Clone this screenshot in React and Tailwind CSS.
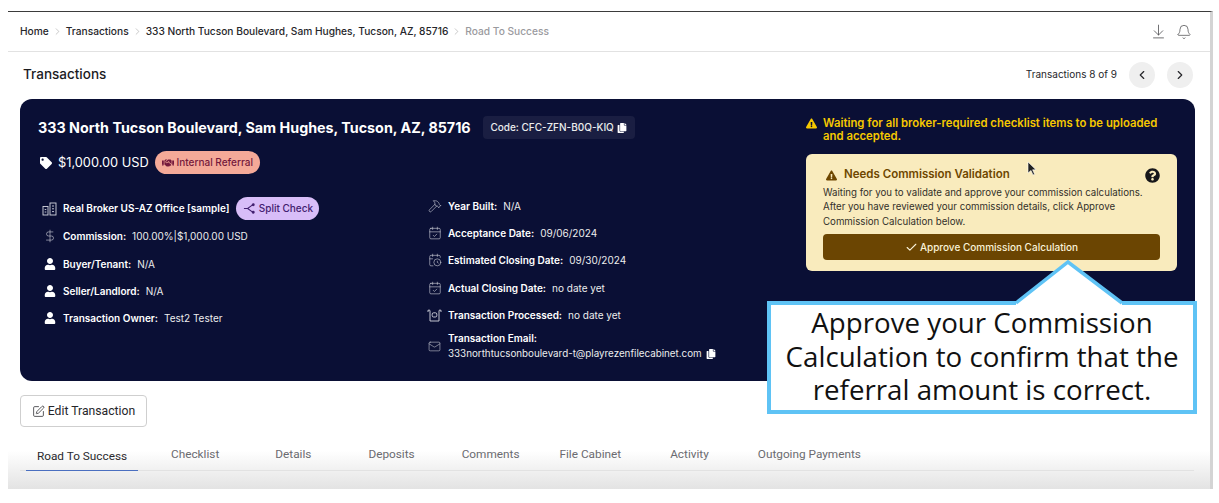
import React from 'react';
import {
  ArrowDownToLine, Bell, CalendarCheck, CalendarClock, Check, ChevronLeft, ChevronRight,
  ChevronRight as Sep, DollarSign, Hammer, Mail, SquarePen,
} from 'lucide-react';
import { FaCopy, FaExclamationTriangle, FaHandshake, FaQuestionCircle, FaTag, FaUser } from 'react-icons/fa';

const Split = () => (
  <svg width="13" height="13" viewBox="0 0 14 14" fill="none" stroke="currentColor" strokeWidth="1.2">
    <path d="M1 7h4l5-3.6M5 7l5 3.6" />
    <circle cx="11" cy="3" r="1" fill="currentColor" />
    <circle cx="11" cy="11" r="1" fill="currentColor" />
  </svg>
);

const Office = () => (
  <svg width="15" height="14" viewBox="0 0 15 14" fill="none" stroke="currentColor" strokeWidth="0.9">
    <rect x="1" y="4.5" width="5" height="8.5" />
    <rect x="8" y="1" width="6" height="12" />
    <path d="M2.7 7.5h1.6M2.7 10h1.6M10 4h2M10 6.8h2M10 9.6h2" />
  </svg>
);

const Processed = () => (
  <svg width="15" height="13" viewBox="0 0 15 13" fill="none" stroke="currentColor" strokeWidth="0.9">
    <path d="M1 3V1.2h2M12 1.2h2V3" />
    <path d="M3 1.5v10.5h9V1.5" />
    <rect x="5.2" y="3.8" width="4.6" height="4.2" rx="1.4" />
  </svg>
);

const Crumb = ({ children, last }) => (
  <>
    <span className={last ? 'text-[#9a9a9e]' : 'text-[#26262a]'}>{children}</span>
    {!last && <Sep size={11} strokeWidth={1} className="text-[#8a8a8a] mx-[3px]" />}
  </>
);

const InfoRow = ({ icon, label, value, className = '' }) => (
  <div className={`flex items-center h-[16px] ${className}`}>
    <span className="w-[25px] flex justify-center text-[#d6d7e0] shrink-0 -ml-[1px] mr-[1px]">{icon}</span>
    <span className="font-semibold text-white">{label}</span>
    {value && <span className="ml-[6px] text-[#eceded]">{value}</span>}
  </div>
);

const tabs = [
  { label: 'Checklist', cls: 'ml-[33px]' },
  { label: 'Details', cls: 'ml-[56px]' },
  { label: 'Deposits', cls: 'ml-[57px]' },
  { label: 'Comments', cls: 'ml-[47px]' },
  { label: 'File Cabinet', cls: 'ml-[40px]' },
  { label: 'Activity', cls: 'ml-[49px]' },
  { label: 'Outgoing Payments', cls: 'ml-[49px]' },
];

export default function App() {
  return (
    <div className="relative w-[1219px] h-[503px] bg-white overflow-hidden font-['Inter',sans-serif]">
      <div className="ml-[8px] mt-[11px] w-[1205px] h-[478px] border-t border-t-[#3b3b3b] border-r-[3px] border-r-[#d4d4d4] bg-gradient-to-b from-white from-[92%] to-[#e3e3e3] flex flex-col">
        {/* Breadcrumb bar */}
        <div className="h-[40px] shrink-0 border-b border-[#e2e2e2] pl-[12px] pr-[18px] flex items-center justify-between">
          <div className="flex items-center text-[10.2px] font-medium">
            <Crumb>Home</Crumb>
            <Crumb>Transactions</Crumb>
            <Crumb>333 North Tucson Boulevard, Sam Hughes, Tucson, AZ, 85716</Crumb>
            <Crumb last>Road To Success</Crumb>
          </div>
          <div className="flex items-center gap-[9px] text-[#48484c]">
            <ArrowDownToLine size={17} strokeWidth={1.1} />
            <Bell size={16} strokeWidth={1.1} />
          </div>
        </div>

        {/* Title row */}
        <div className="h-[47px] shrink-0 pl-[15px] pr-[17px] pb-[2px] flex items-center justify-between">
          <h1 className="text-[13.5px] font-medium text-[#1b1b1f]">Transactions</h1>
          <div className="flex items-center text-[10px] text-[#26262a]">
            <span>Transactions 8 of 9</span>
            <button className="ml-[12px] w-[26px] h-[26px] rounded-full bg-[#efefef] flex items-center justify-center">
              <ChevronLeft size={14} strokeWidth={2} />
            </button>
            <button className="ml-[12px] w-[26px] h-[26px] rounded-full bg-[#efefef] flex items-center justify-center">
              <ChevronRight size={14} strokeWidth={2} />
            </button>
          </div>
        </div>

        {/* Transaction card */}
        <div className="ml-[12px] w-[1175px] h-[282px] shrink-0 rounded-[12px] bg-[#0a0f35] pl-[18px] pr-[18px] flex justify-between">
          <div className="pt-[17px]">
            <div className="flex items-center h-[23px]">
              <h2 className="text-[14.3px] font-bold text-white">333 North Tucson Boulevard, Sam Hughes, Tucson, AZ, 85716</h2>
              <div className="ml-[12px] h-[23px] w-[152px] rounded-[4px] bg-[#1a1e42] flex items-center justify-center gap-[3px] text-[10px] font-medium text-[#eceded]">
                Code: CFC-ZFN-B0Q-KIQ <FaCopy size={10} className="text-white" />
              </div>
            </div>
            <div className="mt-[12px] flex items-center h-[23px]">
              <FaTag size={12} className="text-white ml-[2px]" />
              <span className="ml-[6px] text-[12.8px] text-white">$1,000.00 USD</span>
              <span className="ml-[6px] h-[23px] w-[105px] rounded-full bg-[#f4a998] flex items-center justify-center gap-[3px] text-[10px] font-medium text-[#74193c]">
                <FaHandshake size={12} /> Internal Referral
              </span>
            </div>

            <div className="mt-[23px] flex text-[10px]">
              <div className="w-[385px] flex flex-col">
                <div className="h-[23px] flex items-center">
                  <InfoRow icon={<Office />} label="Real Broker US-AZ Office [sample]" />
                  <span className="ml-[7px] h-[23px] w-[83px] rounded-full bg-[#d8bdf8] flex items-center justify-center gap-[3px] text-[10px] font-medium text-[#42206f]">
                    <Split /> Split Check
                  </span>
                </div>
                <InfoRow className="mt-[8px]" icon={<DollarSign size={14} strokeWidth={1} />} label="Commission:" value="100.00%|$1,000.00 USD" />
                <InfoRow className="mt-[12px]" icon={<FaUser size={12} className="text-white" />} label="Buyer/Tenant:" value="N/A" />
                <InfoRow className="mt-[11px]" icon={<FaUser size={12} className="text-white" />} label="Seller/Landlord:" value="N/A" />
                <InfoRow className="mt-[11px]" icon={<FaUser size={12} className="text-white" />} label="Transaction Owner:" value="Test2 Tester" />
              </div>
              <div className="flex flex-col pt-[1px]">
                <InfoRow icon={<Hammer size={14} strokeWidth={1} />} label="Year Built:" value="N/A" />
                <InfoRow className="mt-[11px]" icon={<CalendarCheck size={14} strokeWidth={1} />} label="Acceptance Date:" value="09/06/2024" />
                <InfoRow className="mt-[11px]" icon={<CalendarClock size={14} strokeWidth={1} />} label="Estimated Closing Date:" value="09/30/2024" />
                <InfoRow className="mt-[12px]" icon={<CalendarCheck size={14} strokeWidth={1} />} label="Actual Closing Date:" value="no date yet" />
                <InfoRow className="mt-[11px]" icon={<Processed />} label="Transaction Processed:" value="no date yet" />
                <div className="mt-[8px] flex items-center">
                  <span className="w-[25px] flex justify-center text-[#d6d7e0] shrink-0 -ml-[1px] mr-[1px]"><Mail size={13} strokeWidth={1} /></span>
                  <div className="leading-[15px]">
                    <div className="font-semibold text-white">Transaction Email:</div>
                    <div className="flex items-center gap-[4px] text-[9.8px] text-[#eceded]">
                      333northtucsonboulevard-t@playrezenfilecabinet.com <FaCopy size={10} className="text-white" />
                    </div>
                  </div>
                </div>
              </div>
            </div>
          </div>

          <div className="w-[371px] pt-[18px]">
            <div className="flex text-[#f6c800] text-[11.35px] font-semibold leading-[13px]">
              <FaExclamationTriangle size={11} className="mt-[1px] mr-[6px] shrink-0" />
              <p>Waiting for all broker-required checklist items to be uploaded<br />and accepted.</p>
            </div>
            <div className="mt-[11px] h-[117px] rounded-[6px] bg-[#f9ebbd] px-[17px] pt-[13px]">
              <div className="flex items-center justify-between h-[16px]">
                <div className="flex items-center text-[11.5px] font-semibold text-[#6e4700]">
                  <FaExclamationTriangle size={11} className="ml-[3px] mr-[7px]" />
                  Needs Commission Validation
                </div>
                <FaQuestionCircle size={15} className="text-[#17171a]" />
              </div>
              <p className="mt-[3px] text-[9.7px] leading-[14.4px] text-[#33302a]">
                Waiting for you to validate and approve your commission calculations.<br />
                After you have reviewed your commission details, click Approve<br />
                Commission Calculation below.
              </p>
              <button className="mt-[5px] w-full h-[26px] rounded-[4px] bg-[#6b4502] text-[#faf2d8] text-[10px] font-medium flex items-center justify-center gap-[2px]">
                <Check size={13} strokeWidth={2} /> Approve Commission Calculation
              </button>
            </div>
          </div>
        </div>

        {/* Edit button */}
        <button className="ml-[12px] mt-[14px] w-[127px] h-[32px] shrink-0 rounded-[4px] border border-[#cfcfcf] bg-white flex items-center justify-center gap-[3px] text-[12.2px] font-['Roboto',sans-serif] text-[#26262a]">
          <SquarePen size={13} strokeWidth={1.4} /> Edit Transaction
        </button>

        {/* Tabs */}
        <div className="ml-[12px] mt-[17px] w-[1174px] h-[27px] shrink-0 border-b border-[#e2e2e2] flex font-['Roboto',sans-serif] text-[11.8px] text-[#6b6b70] pl-[6px]">
          <div className="w-[112px] h-[27px] border-b border-[#4a6fc0] pt-[4px] text-center text-[#2a2a2e]">Road To Success</div>
          {tabs.map((tab) => (
            <div key={tab.label} className={`${tab.cls} pt-[2px]`}>{tab.label}</div>
          ))}
        </div>
      </div>

      {/* Tutorial callout over the page */}
      <div className="absolute left-[767px] top-[301px] w-[430px] h-[113px] border-[4px] border-[#5fc3f5] bg-white flex items-center justify-center text-center font-['Open_Sans',sans-serif] text-[27.7px] leading-[33.5px] text-[#111] pb-[2px]">
        <p>Approve your Commission<br />Calculation to confirm that the<br />referral amount is correct.</p>
      </div>
      <svg className="absolute left-[1010px] top-[256px]" width="120" height="50" viewBox="0 0 120 50">
        <polygon points="6,47 58,6 112,47 112,49 6,49" fill="#fff" />
        <polyline points="6,47 58,6 112,47" fill="none" stroke="#5fc3f5" strokeWidth="3.5" />
      </svg>

      {/* Mouse pointer */}
      <svg className="absolute left-[1027px] top-[161px]" width="10" height="15" viewBox="0 0 10 15">
        <path d="M1 1v11l3-2.5 2 4.5 1.6-.8-2-4.4H9z" fill="#222" stroke="#fff" strokeWidth="0.6" />
      </svg>
    </div>
  );
}
